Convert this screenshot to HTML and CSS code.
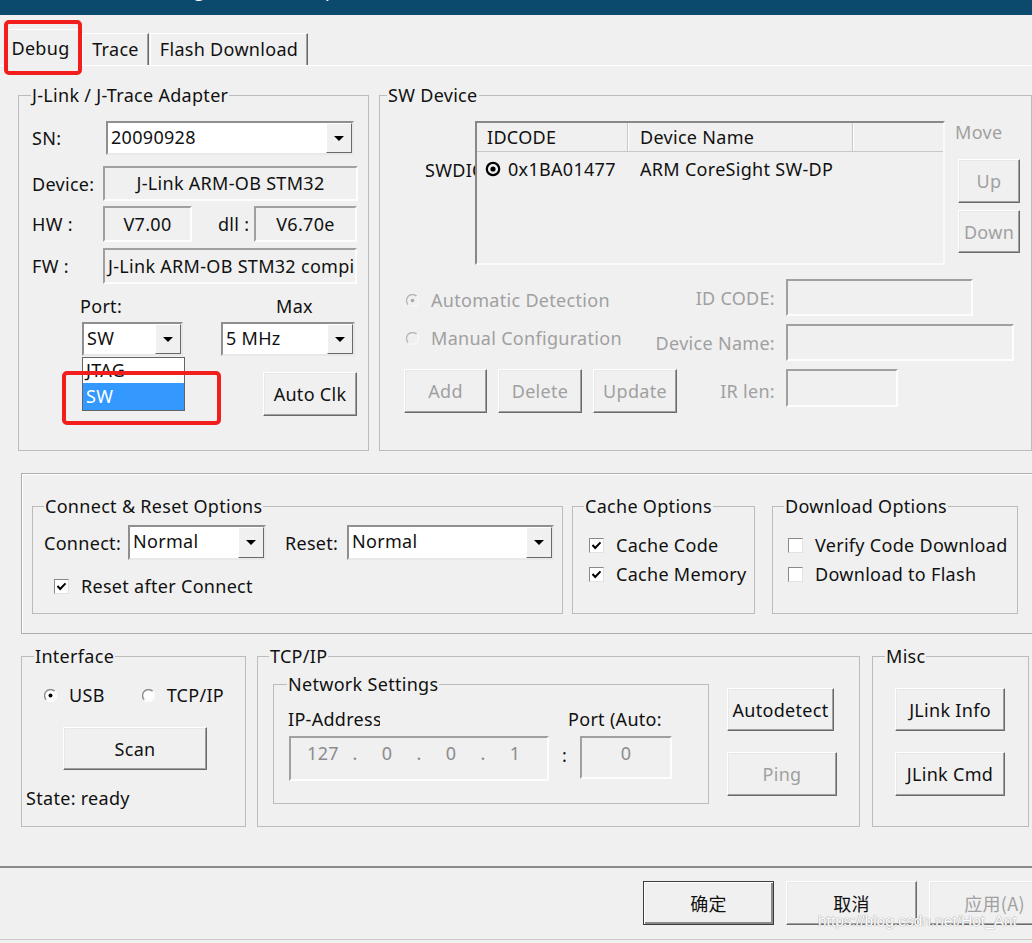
FILE: index.html
```html
<!DOCTYPE html>
<html>
<head>
<meta charset="utf-8">
<title>Cortex-M Target Driver Setup</title>
<link rel="stylesheet" href="styles.css">
</head>
<body>
<div class="win">
  <div class="titlebar"><span class="title">Cortex-M Target Driver Setup</span></div>

  <div class="tabs">
    <div class="tab sel">Debug</div>
    <div class="tab t-trace">Trace</div>
    <div class="tab t-flash">Flash Download</div>
  </div>

  <div class="panel">
    <div class="row1">
      <fieldset class="grp g-jlink">
        <legend>J-Link / J-Trace Adapter</legend>
        <div class="jl-row r-sn">
          <span class="lbl">SN:</span>
          <div class="combo c-sn"><span class="cv">20090928</span><span class="cbtn"><i class="tri"></i></span></div>
        </div>
        <div class="jl-row r-dev">
          <span class="lbl">Device:</span>
          <div class="field f-dev ctr">J-Link ARM-OB STM32</div>
        </div>
        <div class="jl-row r-hw">
          <span class="lbl">HW :</span>
          <div class="field f-hw ctr">V7.00</div>
          <span class="l-dll">dll :</span>
          <div class="field f-dll ctr">V6.70e</div>
        </div>
        <div class="jl-row r-fw">
          <span class="lbl">FW :</span>
          <div class="field f-fw">J-Link ARM-OB STM32 compiled Aug 22 2012 11:44:01</div>
        </div>
        <div class="jl-row r-plbl">
          <span class="l-port">Port:</span>
          <span class="l-max">Max</span>
        </div>
        <div class="jl-row r-port">
          <div class="portwrap">
            <div class="combo c-port"><span class="cv">SW</span><span class="cbtn"><i class="tri"></i></span></div>
            <div class="droplist">
              <div class="di di-jtag">JTAG</div>
              <div class="di di-sel">SW</div>
            </div>
          </div>
          <div class="combo c-max"><span class="cv">5 MHz</span><span class="cbtn"><i class="tri"></i></span></div>
        </div>
        <div class="jl-row r-auto">
          <button class="btn b-auto">Auto Clk</button>
        </div>
      </fieldset>

      <fieldset class="grp g-sw">
        <legend>SW Device</legend>
        <div class="sw-top">
          <div class="swdi">SWDIO</div>
          <div class="list">
            <div class="lhead">
              <div class="lh c1">IDCODE</div>
              <div class="lh c2">Device Name</div>
              <div class="lh c3"></div>
            </div>
            <div class="lrow">
              <div class="lc c1">
                <svg class="lradio" width="16" height="16" viewBox="0 0 16 16"><circle cx="8" cy="8" r="6.2" fill="none" stroke="#000" stroke-width="2.2"/><circle cx="8" cy="8" r="2.6" fill="#000"/></svg>
                <span>0x1BA01477</span>
              </div>
              <div class="lc c2">ARM CoreSight SW-DP</div>
            </div>
          </div>
          <div class="movecol">
            <span class="movelbl">Move</span>
            <button class="btn dis b-up">Up</button>
            <button class="btn dis b-down">Down</button>
          </div>
        </div>
        <div class="sw-bottom">
          <div class="rad dis r-auto-det">
            <svg class="radio" width="13" height="13" viewBox="0 0 13 13"><path d="M2.3 10.7 A5.9 5.9 0 0 1 10.7 2.3" fill="none" stroke="#b5b5b5" stroke-width="1.3"/><path d="M10.7 2.3 A5.9 5.9 0 0 1 2.3 10.7" fill="none" stroke="#f8f8f8" stroke-width="1.3"/><circle cx="6.5" cy="6.5" r="4.8" fill="#f0f0f0"/><circle cx="6.5" cy="6.5" r="1.8" fill="#a8a8a8"/></svg>
            <span>Automatic Detection</span>
          </div>
          <span class="lblr">ID CODE:</span>
          <div class="field f-id"></div>

          <div class="rad dis r-man">
            <svg class="radio" width="13" height="13" viewBox="0 0 13 13"><path d="M2.3 10.7 A5.9 5.9 0 0 1 10.7 2.3" fill="none" stroke="#b5b5b5" stroke-width="1.3"/><path d="M10.7 2.3 A5.9 5.9 0 0 1 2.3 10.7" fill="none" stroke="#f8f8f8" stroke-width="1.3"/><circle cx="6.5" cy="6.5" r="4.8" fill="#f0f0f0"/></svg>
            <span>Manual Configuration</span>
          </div>
          <span class="lblr">Device Name:</span>
          <div class="field f-dn"></div>

          <div class="sw-btns">
            <button class="btn dis b-add">Add</button>
            <button class="btn dis b-del">Delete</button>
            <button class="btn dis b-upd">Update</button>
          </div>
          <span class="lblr">IR len:</span>
          <div class="field f-ir"></div>
        </div>
      </fieldset>
    </div>

    <div class="mid">
      <fieldset class="grp g-conn">
        <legend>Connect &amp; Reset Options</legend>
        <div class="conn-row">
          <span class="l-conn">Connect:</span>
          <div class="combo c-conn"><span class="cv">Normal</span><span class="cbtn"><i class="tri"></i></span></div>
          <span class="l-reset">Reset:</span>
          <div class="combo c-reset"><span class="cv">Normal</span><span class="cbtn"><i class="tri"></i></span></div>
        </div>
        <div class="chkrow r-rac">
          <span class="chk"><svg width="13" height="13" viewBox="0 0 13 13"><path d="M2.5 6 L5.2 9 L10.5 3.4" fill="none" stroke="#000" stroke-width="2"/></svg></span>
          <span>Reset after Connect</span>
        </div>
      </fieldset>
      <fieldset class="grp g-cache">
        <legend>Cache Options</legend>
        <div class="chkcol">
          <div class="chkrow"><span class="chk"><svg width="13" height="13" viewBox="0 0 13 13"><path d="M2.5 6 L5.2 9 L10.5 3.4" fill="none" stroke="#000" stroke-width="2"/></svg></span><span>Cache Code</span></div>
          <div class="chkrow"><span class="chk"><svg width="13" height="13" viewBox="0 0 13 13"><path d="M2.5 6 L5.2 9 L10.5 3.4" fill="none" stroke="#000" stroke-width="2"/></svg></span><span>Cache Memory</span></div>
        </div>
      </fieldset>
      <fieldset class="grp g-dl">
        <legend>Download Options</legend>
        <div class="chkcol">
          <div class="chkrow"><span class="chk"></span><span class="nowrap">Verify Code Download</span></div>
          <div class="chkrow"><span class="chk"></span><span>Download to Flash</span></div>
        </div>
      </fieldset>
    </div>

    <div class="row3">
      <fieldset class="grp g-if">
        <legend>Interface</legend>
        <div class="if-radios">
          <div class="rad">
            <svg class="radio" width="13" height="13" viewBox="0 0 13 13"><path d="M2.3 10.7 A5.9 5.9 0 0 1 10.7 2.3" fill="none" stroke="#8a8a8a" stroke-width="1.3"/><path d="M10.7 2.3 A5.9 5.9 0 0 1 2.3 10.7" fill="none" stroke="#fff" stroke-width="1.3"/><circle cx="6.5" cy="6.5" r="4.8" fill="#fff"/><circle cx="6.5" cy="6.5" r="2" fill="#000"/></svg>
            <span>USB</span>
          </div>
          <div class="rad r-tcp">
            <svg class="radio" width="13" height="13" viewBox="0 0 13 13"><path d="M2.3 10.7 A5.9 5.9 0 0 1 10.7 2.3" fill="none" stroke="#8a8a8a" stroke-width="1.3"/><path d="M10.7 2.3 A5.9 5.9 0 0 1 2.3 10.7" fill="none" stroke="#fff" stroke-width="1.3"/><circle cx="6.5" cy="6.5" r="4.8" fill="#fff"/></svg>
            <span>TCP/IP</span>
          </div>
        </div>
        <button class="btn b-scan">Scan</button>
        <div class="state">State: ready</div>
      </fieldset>

      <fieldset class="grp g-tcp">
        <legend>TCP/IP</legend>
        <div class="tcp-body">
          <fieldset class="grp g-net">
            <legend>Network Settings</legend>
            <div class="net-lbls">
              <span class="l-ip">IP-Address</span>
              <span class="l-pa">Port (Auto: 0)</span>
            </div>
            <div class="net-fields">
              <div class="field f-ip">
                <span class="oct">127</span><span class="dot">.</span><span class="oct">0</span><span class="dot">.</span><span class="oct">0</span><span class="dot">.</span><span class="oct">1</span>
              </div>
              <span class="colon">:</span>
              <div class="field f-port"><span class="oct">0</span></div>
            </div>
          </fieldset>
          <div class="tcp-btns">
            <button class="btn b-autod">Autodetect</button>
            <button class="btn dis b-ping">Ping</button>
          </div>
        </div>
      </fieldset>

      <fieldset class="grp g-misc">
        <legend>Misc</legend>
        <div class="misc-btns">
          <button class="btn b-info">JLink Info</button>
          <button class="btn b-cmd">JLink Cmd</button>
        </div>
      </fieldset>
    </div>
  </div>

  <div class="footer">
    <button class="btn def b-ok">确定</button>
    <button class="btn b-cancel">取消</button>
    <button class="btn dis b-apply">应用(A)</button>
  </div>

  <div class="mark mark-tab"></div>
  <div class="mark mark-port"></div>
  <div class="watermark">https://blog.csdn.net/Hot_Ant</div>
</div>
</body>
</html>
```
FILE: styles.css
```css
* { box-sizing: border-box; }
html, body { margin: 0; padding: 0; }
body {
  width: 1032px;
  height: 943px;
  overflow: hidden;
  background: #f0f0f0;
  font-family: "Noto Sans", "Noto Sans CJK SC", sans-serif;
  font-size: 18px;
  letter-spacing: 0.3px;
  color: #111;
}
.win {
  position: relative;
  width: 1032px;
  height: 943px;
  overflow: hidden;
  background: #f0f0f0;
}

/* group boxes (base rules first, specific ones override later) */
.grp {
  margin: 0;
  padding: 0;
  min-width: 0;
  border: 1px solid #bcbcbc;
}
.grp > legend {
  padding: 0 1px;
  margin-left: 12px;
  line-height: 22px;
  height: 22px;
  white-space: nowrap;
}

/* title bar */
.titlebar {
  height: 15px;
  background: #0b4a6d;
  overflow: hidden;
}
.title {
  display: block;
  color: #fff;
  line-height: 22px;
  margin-top: -21px;
  padding-left: 82px;
  white-space: nowrap;
}

/* tabs */
.tabs {
  height: 50px;
  display: flex;
  align-items: flex-end;
  padding-left: 4px;
}
.tab {
  height: 32px;
  line-height: 31px;
  text-align: center;
  background: #f0f0f0;
  border-top: 1px solid #fff;
  border-left: 1px solid #fff;
  border-right: 1px solid #696969;
  box-shadow: inset -1px 0 0 #a0a0a0;
  white-space: nowrap;
}
.tab.sel {
  width: 78px;
  height: 37px;
  line-height: 36px;
  margin-bottom: -1px;
  position: relative;
  z-index: 1;
  border-right: none;
  box-shadow: none;
  padding-right: 6px;
}
.t-trace { width: 67px; }
.t-flash { width: 158px; margin-left: 1px; }

/* panel */
.panel {
  height: 803px;
  border-top: 1px solid #fff;
  border-bottom: 2px solid #8a8a8a;
}

/* generic controls */
.combo {
  display: flex;
  height: 34px;
  background: #fff;
  border: 2px solid;
  border-color: #8f8f8f #e8e8e8 #e8e8e8 #8f8f8f;
}
.cv {
  flex: 1;
  padding-left: 3px;
  line-height: 28px;
  white-space: nowrap;
  overflow: hidden;
}
.cbtn {
  width: 26px;
  height: 100%;
  background: #f0f0f0;
  border: 1px solid;
  border-color: #fff #696969 #696969 #fff;
  display: flex;
  align-items: center;
  justify-content: center;
}
.tri {
  width: 0;
  height: 0;
  border-left: 5px solid transparent;
  border-right: 5px solid transparent;
  border-top: 5px solid #000;
}
.field {
  background: #f0f0f0;
  border: 2px solid;
  border-color: #a0a0a0 #fdfdfd #fdfdfd #a0a0a0;
  white-space: nowrap;
  overflow: hidden;
}
.field.ctr {
  text-align: center;
}
.btn {
  font: inherit;
  letter-spacing: inherit;
  color: #111;
  background: #f0f0f0;
  padding: 0;
  flex: none;
  border: 1px solid;
  border-color: #fff #6a6a6a #6a6a6a #fff;
  box-shadow: inset -1px -1px 0 #a0a0a0, inset 1px 1px 0 #e8e8e8;
  white-space: nowrap;
}
.btn.dis { color: #a0a0a0; }
.btn.def {
  border: 1px solid #3c3c3c;
  box-shadow: inset 1px 1px 0 #fff, inset -2px -2px 0 #8a8a8a;
}
.rad {
  display: flex;
  align-items: center;
  height: 22px;
  white-space: nowrap;
}
.rad.dis { color: #a0a0a0; }
.radio { flex: none; }
.chk {
  flex: none;
  width: 15px;
  height: 15px;
  background: #fff;
  border: 1px solid;
  border-color: #8a8a8a #e2e2e2 #e2e2e2 #8a8a8a;
  display: flex;
  align-items: center;
  justify-content: center;
}
.chkrow {
  display: flex;
  align-items: center;
  height: 22px;
  gap: 12px;
  white-space: nowrap;
}
.nowrap { white-space: nowrap; }

/* row 1 */
.row1 {
  display: flex;
  gap: 10px;
  margin-top: 18px;
  padding-left: 18px;
}
.g-jlink {
  width: 351px;
  height: 367px;
}
.jl-row {
  display: flex;
  align-items: center;
  padding-left: 13px;
}
.lbl { width: 71px; flex: none; }
.r-sn { margin-top: 15px; height: 34px; }
.c-sn { width: 248px; margin-left: 3px; }
.r-dev { margin-top: 11px; height: 35px; }
.f-dev { width: 255px; height: 35px; line-height: 31px; }
.r-hw { margin-top: 5px; height: 36px; }
.f-hw { width: 89px; height: 36px; line-height: 32px; }
.l-dll { width: 36px; margin-left: 26px; }
.f-dll { width: 103px; height: 36px; line-height: 32px; }
.r-fw { margin-top: 6px; height: 36px; }
.f-fw { width: 254px; height: 36px; line-height: 32px; padding-left: 3px; }
.r-plbl { margin-top: 11px; height: 22px; line-height: 22px; }
.l-port { margin-left: 48px; }
.l-max { margin-left: 154px; }
.r-port { margin-top: 5px; height: 34px; padding-left: 63px; }
.portwrap { position: relative; }
.c-port { width: 101px; }
.c-max { width: 134px; margin-left: 38px; }
.droplist {
  position: absolute;
  left: 0;
  top: 35px;
  width: 103px;
  height: 54px;
  background: #fff;
  border: 1px solid #646464;
  overflow: hidden;
  z-index: 2;
}
.di {
  height: 26px;
  line-height: 26px;
  padding-left: 3px;
}
.di-jtag { margin-top: -2px; line-height: 28px; height: 27px; }
.di-sel {
  background: #3399ff;
  color: #fff;
  height: 27px;
  line-height: 27px;
}
.r-auto { margin-top: 16px; padding-left: 244px; }
.b-auto { width: 94px; height: 44px; }

/* SW device */
.g-sw {
  width: 653px;
  height: 367px;
}
.g-sw > legend { margin-left: 7px; }
.sw-top {
  display: flex;
  align-items: flex-start;
  margin-top: 15px;
}
.swdi {
  width: 95px;
  flex: none;
  height: 22px;
  line-height: 22px;
  margin-top: 38px;
  padding-left: 45px;
  overflow: hidden;
  white-space: nowrap;
}
.list {
  width: 470px;
  height: 144px;
  flex: none;
  border: 2px solid;
  border-color: #888 #fafafa #fafafa #888;
  background: #f0f0f0;
}
.lhead {
  display: flex;
  height: 29px;
  border-bottom: 1px solid #c8c8c8;
}
.lh {
  line-height: 28px;
  border-right: 1px solid #c8c8c8;
  box-shadow: 1px 0 0 #fff;
}
.lh.c1 { width: 151px; padding-left: 10px; }
.lh.c2 { width: 225px; padding-left: 12px; }
.lh.c3 { flex: 1; border-right: none; box-shadow: none; }
.lrow {
  display: flex;
  height: 34px;
  align-items: center;
}
.lc.c1 {
  width: 151px;
  display: flex;
  align-items: center;
  gap: 7px;
  padding-left: 8px;
}
.lc.c2 { padding-left: 12px; }
.movecol {
  margin-left: 10px;
  display: flex;
  flex-direction: column;
  align-items: flex-start;
}
.movelbl { color: #a0a0a0; line-height: 22px; }
.b-up { width: 62px; height: 44px; margin-top: 16px; margin-left: 3px; }
.b-down { width: 62px; height: 43px; margin-top: 7px; margin-left: 3px; }

.sw-bottom {
  display: grid;
  grid-template-columns: 236px 135px auto;
  grid-template-rows: 37px 37px 44px;
  row-gap: 8px;
  margin-top: 14px;
  padding-left: 24px;
}
.sw-bottom .rad { gap: 12px; padding-left: 2px; align-self: start; }
.r-auto-det { margin-top: 10px; }
.r-man { margin-top: 3px; }
.lblr {
  text-align: right;
  align-self: center;
  color: #a0a0a0;
  white-space: nowrap;
}
.f-id { width: 187px; height: 37px; margin-left: 11px; }
.f-dn { width: 228px; height: 37px; margin-left: 11px; }
.f-ir { width: 112px; height: 38px; margin-left: 11px; }
.sw-btns { display: flex; gap: 11px; }
.b-add { width: 83px; height: 44px; }
.b-del { width: 84px; height: 44px; }
.b-upd { width: 84px; height: 44px; }

/* middle area */
.mid {
  margin-top: 22px;
  margin-left: 21px;
  width: 1040px;
  height: 161px;
  border: 1px solid #adadad;
  box-shadow: inset 1px 1px 0 #fff;
  display: flex;
  align-items: flex-start;
  padding-top: 21px;
  padding-left: 10px;
}
.g-conn { width: 531px; height: 119px; }
.g-cache { width: 183px; height: 119px; margin-left: 9px; }
.g-dl { width: 246px; height: 119px; margin-left: 17px; }
.g-conn > legend, .g-cache > legend, .g-dl > legend { margin-left: 11px; }
.conn-row {
  display: flex;
  align-items: center;
  margin-top: 8px;
  padding-left: 11px;
  height: 35px;
}
.l-conn { width: 84px; flex: none; }
.c-conn { width: 138px; height: 35px; }
.l-reset { width: 62px; margin-left: 19px; flex: none; }
.c-reset { width: 207px; height: 35px; }
.r-rac { margin-top: 15px; padding-left: 21px; }
.chkcol {
  display: flex;
  flex-direction: column;
  gap: 7px;
  margin-top: 17px;
  padding-left: 16px;
}
.g-dl .chkcol { padding-left: 15px; }

/* row 3 */
.row3 {
  display: flex;
  align-items: flex-start;
  margin-top: 11px;
  padding-left: 21px;
}
.g-if { width: 225px; height: 182px; }
.g-tcp { width: 603px; height: 182px; margin-left: 11px; }
.g-misc { width: 157px; height: 182px; margin-left: 12px; }
.g-tcp > legend { margin-left: 11px; }
.if-radios {
  display: flex;
  margin-top: 17px;
  padding-left: 22px;
}
.if-radios .rad { gap: 12px; }
.if-radios .r-tcp { margin-left: 37px; }
.b-scan {
  display: block;
  width: 144px;
  height: 43px;
  margin-top: 21px;
  margin-left: 41px;
}
.state {
  margin-top: 17px;
  padding-left: 4px;
  line-height: 22px;
}
.tcp-body {
  display: flex;
  align-items: flex-start;
}
.g-net {
  width: 436px;
  height: 131px;
  margin-top: 6px;
  margin-left: 15px;
  flex: none;
}
.g-net > legend { margin-left: 13px; }
.net-lbls {
  display: flex;
  margin-top: 13px;
  padding-left: 14px;
  line-height: 22px;
  height: 22px;
}
.l-ip { width: 92px; overflow: hidden; white-space: nowrap; }
.l-pa { margin-left: 188px; width: 93px; overflow: hidden; white-space: nowrap; }
.net-fields {
  display: flex;
  align-items: flex-start;
  margin-top: 6px;
  padding-left: 15px;
}
.f-ip {
  width: 260px;
  height: 45px;
  display: flex;
  padding-left: 11px;
  padding-top: 2px;
  color: #8c8c8c;
}
.oct { width: 42px; text-align: center; line-height: 26px; }
.dot { width: 22px; text-align: center; line-height: 26px; }
.colon {
  width: 31px;
  text-align: center;
  line-height: 22px;
  margin-top: 8px;
}
.f-port {
  width: 92px;
  height: 43px;
  display: flex;
  justify-content: center;
  padding-top: 2px;
  color: #8c8c8c;
}
.tcp-btns {
  display: flex;
  flex-direction: column;
  align-items: flex-start;
  gap: 21px;
  margin-top: 21px;
  margin-left: 18px;
}
.b-autod { width: 107px; height: 43px; }
.b-ping { width: 110px; height: 44px; }
.g-misc > legend { margin-left: 12px; }
.misc-btns {
  display: flex;
  flex-direction: column;
  align-items: flex-start;
  gap: 21px;
  margin-top: 21px;
  padding-left: 22px;
}
.b-info { width: 110px; height: 43px; }
.b-cmd { width: 110px; height: 44px; }

/* footer */
.footer {
  display: flex;
  gap: 12px;
  padding-top: 13px;
  padding-left: 643px;
  height: 72px;
  border-bottom: 1px solid #c8c8c8;
  font-family: "Noto Sans CJK SC", "Noto Sans", sans-serif;
}
.footer .btn { width: 131px; height: 44px; }

/* overlays */
.mark {
  position: absolute;
  border: 4px solid #f21e1e;
  border-radius: 5px;
  z-index: 5;
}
.mark-tab { left: 4px; top: 20px; width: 78px; height: 55px; }
.mark-port { left: 62px; top: 371px; width: 159px; height: 54px; }
.watermark {
  position: absolute;
  left: 818px;
  top: 912px;
  font-family: "Liberation Sans", sans-serif;
  font-size: 15.5px;
  letter-spacing: 0;
  color: #fff;
  text-shadow: 0 0 1px #9a9a9a, 0 0 1px #9a9a9a;
  white-space: nowrap;
  z-index: 6;
}
```
